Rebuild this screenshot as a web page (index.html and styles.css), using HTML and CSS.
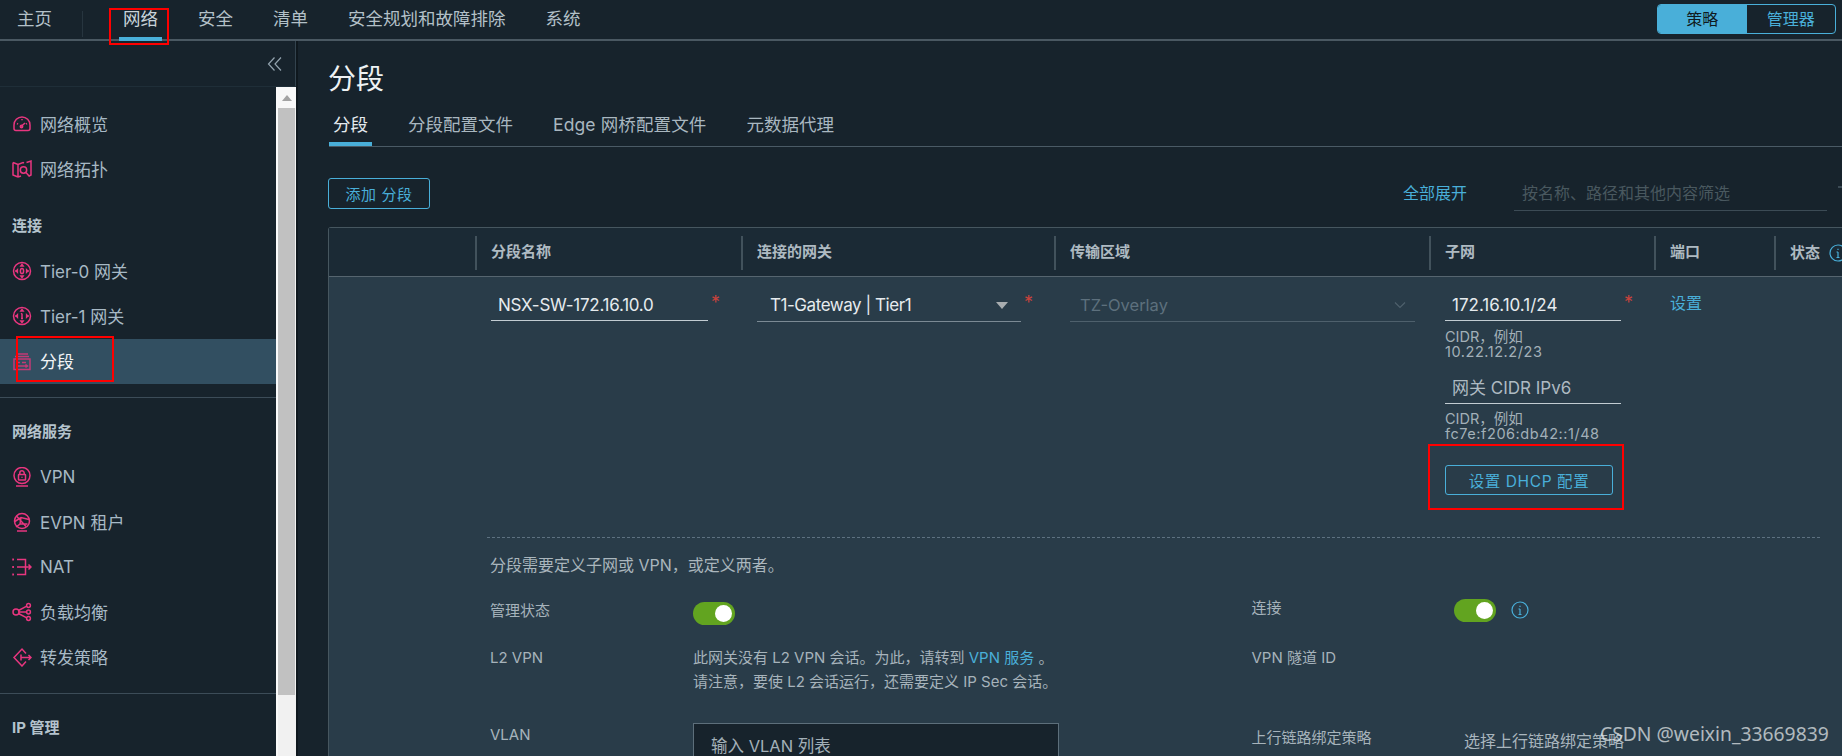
FILE: index.html
```html
<!DOCTYPE html>
<html lang="zh-CN">
<head>
<meta charset="utf-8">
<title>分段</title>
<link rel="stylesheet" href="styles.css">
</head>
<body>
<div class="app">
  <header class="topbar">
    <a class="nav-item">主页</a>
    <span class="nav-sep"></span>
    <a class="nav-item active">网络</a>
    <a class="nav-item">安全</a>
    <a class="nav-item">清单</a>
    <a class="nav-item">安全规划和故障排除</a>
    <a class="nav-item">系统</a>
    <div class="seg-switch">
      <span class="seg on">策略</span>
      <span class="seg">管理器</span>
    </div>
  </header>

  <div class="workspace">
    <aside class="sidebar">
      <div class="collapse-row">
        <svg class="collapse-icon" viewBox="0 0 16 16"><path d="M7.500 1.500 1.500 8l6 6.500M14 1.500 8 8l6 6.500"/></svg>
      </div>
      <div class="side-scroll">
        <nav class="side-nav">
          <a class="side-item"><svg class="ico" viewBox="0 0 20 20"><path d="M2 11a8 8 0 0 1 16 0v3.500a2 2 0 0 1-2 2H4a2 2 0 0 1-2-2zM5 9.500l1 .6M10 5v1.200M15 9.500l-1 .6M9 12.500l4-3.500"/><circle cx="9.500" cy="12.500" r="1.200"/></svg><span>网络概览</span></a>
          <a class="side-item"><svg class="ico" viewBox="0 0 20 20"><path d="M1 3.500 6 5.500 11 3.500 12 4M6 5.500V18M6 18 1 16V3.500M6 18l3-1M14.500 3.500 19 2v14l-2 1"/><circle cx="11.500" cy="11" r="3.200"/><path d="m14 13.500 3.500 4"/></svg><span>网络拓扑</span></a>
          <h3 class="side-head">连接</h3>
          <a class="side-item"><svg class="ico" viewBox="0 0 20 20"><circle cx="10" cy="10" r="8.500"/><ellipse cx="10" cy="10" rx="1.600" ry="2.600"/><path d="M10 2.800v1.800M10 15.400v1.800M3 10h2.400M14.600 10H17M4.200 10l1.200-1.200v2.400zM15.800 10l-1.200-1.200v2.400zM10 3.500 8.900 5h2.200zM10 16.500 8.900 15h2.200z"/></svg><span>Tier-0 网关</span></a>
          <a class="side-item"><svg class="ico" viewBox="0 0 20 20"><circle cx="10" cy="10" r="8.500"/><path d="M10 7.500v5M9 8l1-.5M9 12.500h2M3 10h2.400M14.600 10H17M4.200 10l1.200-1.200v2.400zM15.800 10l-1.200-1.200v2.400zM10 3.500 8.900 5h2.200zM10 16.500 8.900 15h2.200z"/></svg><span>Tier-1 网关</span></a>
          <a class="side-item active"><svg class="ico" viewBox="0 0 20 20"><path d="M4 3h12M3 5.500h14"/><rect x="2" y="8" width="16" height="10.500"/><path d="M5 11.500h3M10 11.500h4M5 15h6M11 15h4M13.500 13.500 15.500 15l-2 1.500"/></svg><span>分段</span></a>
          <hr class="side-rule">
          <h3 class="side-head">网络服务</h3>
          <a class="side-item"><svg class="ico" viewBox="0 0 20 20"><circle cx="10" cy="8.500" r="8"/><rect x="6.500" y="7.500" width="7" height="5.500" rx=".5"/><path d="M7.800 7.500V6a2.200 2.200 0 0 1 4.400 0v1.500M10 9.800v1M4 19h12"/></svg><span>VPN</span></a>
          <a class="side-item"><svg class="ico" viewBox="0 0 20 20"><circle cx="10" cy="9" r="7.500"/><path d="M4.500 4 14 14.500M2.800 9.500 9 5.500l8 2M9 5.500 8 12l-4 3M8 12l7.500 0M5 19h10"/></svg><span>EVPN 租户</span></a>
          <a class="side-item"><svg class="ico" viewBox="0 0 20 20"><path d="M5 2.500h8.500v15H5M5 10h14M16.500 7.500 19 10l-2.500 2.500M1 2.500h1M1 10h1M1 17.500h1M1 1.500v2M1 9v2M1 16.500v2"/></svg><span>NAT</span></a>
          <a class="side-item"><svg class="ico" viewBox="0 0 20 20"><circle cx="4" cy="10" r="3"/><circle cx="16.500" cy="3.500" r="1.900"/><circle cx="16.500" cy="10" r="1.900"/><circle cx="16.500" cy="16.500" r="1.900"/><path d="M6.500 8.500 14.800 4.200M7 10h7.600M6.500 11.500l8.300 4.300"/></svg><span>负载均衡</span></a>
          <a class="side-item"><svg class="ico" viewBox="0 0 20 20"><path d="M14 6.500 10 2 2 10.500 10 19l4-4.500M9 7.500v6M9 10.500h10M16.500 8l2.500 2.500-2.500 2.500"/></svg><span>转发策略</span></a>
          <hr class="side-rule">
          <h3 class="side-head">IP 管理</h3>
        </nav>
        <div class="scrollbar">
          <div class="scroll-btn"><span class="scroll-arrow"></span></div>
          <div class="scroll-thumb"></div>
        </div>
      </div>
    </aside>

    <main class="content">
      <h1 class="page-title">分段</h1>
      <div class="tabs">
        <a class="tab active">分段</a>
        <a class="tab">分段配置文件</a>
        <a class="tab tab-edge">Edge 网桥配置文件</a>
        <a class="tab">元数据代理</a>
      </div>

      <div class="toolbar">
        <button class="btn add-btn">添加 分段</button>
        <a class="link expand-all">全部展开</a>
        <div class="filter">按名称、路径和其他内容筛选</div>
        <span class="filter-icon"></span>
      </div>

      <section class="table">
        <div class="thead">
          <div class="th"></div>
          <div class="th">分段名称</div>
          <div class="th">连接的网关</div>
          <div class="th">传输区域</div>
          <div class="th">子网</div>
          <div class="th">端口</div>
          <div class="th th-status">状态 <svg class="info" viewBox="0 0 18 18"><circle cx="9" cy="9" r="8"/><path d="M9 8v5.500M7.500 8H9M7.500 13.500h3M9 4.800v1.200"/></svg></div>
        </div>
        <div class="row-main">
          <div class="td"></div>
          <div class="td field-line">
            <div class="field name-field">NSX-SW-172.16.10.0</div><span class="req">*</span>
          </div>
          <div class="td field-line">
            <div class="field tall gateway-field"><span>T1-Gateway | Tier1</span><span class="caret"></span></div><span class="req">*</span>
          </div>
          <div class="td">
            <div class="field tall disabled tz-field"><span>TZ-Overlay</span><svg class="chev" viewBox="0 0 12 8"><path d="m1 1.500 5 5 5-5"/></svg></div>
          </div>
          <div class="td subnet-cell">
            <div class="field-line">
              <div class="field subnet-field">172.16.10.1/24</div><span class="req">*</span>
            </div>
            <p class="hint first">CIDR，例如<br><span class="hint-val">10.22.12.2/23</span></p>
            <div class="field subnet-field ipv6">网关 CIDR IPv6</div>
            <p class="hint">CIDR，例如<br><span class="hint-val">fc7e:f206:db42::1/48</span></p>
            <button class="btn dhcp-btn">设置 DHCP 配置</button>
          </div>
          <div class="td"><a class="link ports">设置</a></div>
          <div class="td"></div>
        </div>

        <div class="detail">
          <p class="detail-note">分段需要定义子网或 VPN，或定义两者。</p>
          <div class="form-grid">
            <div class="label admin-label">管理状态</div>
            <div class="toggle-wrap admin-toggle"><span class="toggle"></span></div>
            <div class="label">连接</div>
            <div class="toggle-wrap conn-toggle"><span class="toggle"></span><svg class="info conn-info" viewBox="0 0 18 18"><circle cx="9" cy="9" r="8"/><path d="M9 8v5.500M7.500 8H9M7.500 13.500h3M9 4.800v1.200"/></svg></div>

            <div class="label second">L2 VPN</div>
            <p class="para">此网关没有 L2 VPN 会话。为此，请转到 <a class="link">VPN 服务</a> 。<br>请注意，要使 L2 会话运行，还需要定义 IP Sec 会话。</p>
            <div class="label second">VPN 隧道 ID</div>
            <div></div>

            <div class="label second">VLAN</div>
            <div class="vlan-input">输入 VLAN 列表</div>
            <div class="label uplink-label">上行链路绑定策略</div>
            <div class="uplink-select">选择上行链路绑定策略</div>
          </div>
        </div>
      </section>
    </main>
  </div>

  <span class="mark mark-nav"></span>
  <span class="mark mark-side"></span>
  <span class="mark mark-dhcp"></span>
  <span class="watermark">CSDN @weixin_33669839</span>
</div>
</body>
</html>
```

FILE: styles.css
```css
* { box-sizing: border-box; }
html, body { margin: 0; padding: 0; height: 756px; overflow: hidden; background: #17232c; }
body { font-family: Inter, "Noto Sans CJK SC", sans-serif; color: #adbbc4; }
a { text-decoration: none; }
p, h1, h3 { margin: 0; }

.app { position: relative; width: 1842px; height: 756px; overflow: hidden; display: flex; flex-direction: column; }

/* top bar */
.topbar { flex: none; height: 41px; display: flex; align-items: flex-start; padding-left: 13px; border-bottom: 2px solid #4a5862; background: #17232c; }
.nav-item { height: 41px; padding: 0 4px; margin-right: 32px; font-size: 17.500px; line-height: 38px; color: #b3c0c8; border-bottom: 4px solid transparent; }
.nav-item:first-child { margin-right: 26px; }
.nav-item.active { color: #c8d3da; border-bottom-color: #49afd9; }
.nav-sep { width: 1px; height: 26px; margin: 11px 36px 0 0; background: #27353f; }
.seg-switch { margin: 4px 6px 0 auto; width: 179px; height: 30px; display: flex; border: 1px solid #49afd9; border-radius: 4px; overflow: hidden; }
.seg { flex: 1; font-size: 16px; line-height: 28px; text-align: center; color: #49afd9; }
.seg.on { background: #49afd9; color: #101a20; }

/* layout */
.workspace { flex: 1; min-height: 0; display: flex; }
.sidebar { flex: none; width: 298px; border-right: 2px solid #0f181e; box-shadow: inset -1px 0 0 #33434e; display: flex; flex-direction: column; }
.collapse-row { flex: none; height: 46px; border-bottom: 1px solid #1f2e38; display: flex; justify-content: flex-end; align-items: flex-start; padding: 15px 13px 0 0; }
.collapse-icon { width: 16px; height: 16px; fill: none; stroke: #93a3ae; stroke-width: 1.200; }
.side-scroll { flex: 1; min-height: 0; display: flex; }
.side-nav { flex: none; width: 276px; padding-top: 15px; }
.side-item { height: 45px; display: flex; align-items: center; gap: 8px; padding: 0 0 2px 12px; font-size: 17px; color: #a7b9c5; }
.side-item.active { background: #324f61; color: #f2f5f7; }
.side-item.active .ico { stroke: #c33a75; }
.ico { flex: none; width: 20px; height: 20px; fill: none; stroke: #e8367f; stroke-width: 1.500; }
.side-head { height: 45px; margin-top: 12px; padding-left: 12px; font-size: 15px; line-height: 43px; font-weight: 700; color: #b4c3cd; }
.side-rule { height: 1px; margin: 12px 0 0; border: 0; background: #3c4c58; }
.side-item + .side-rule { margin-top: 13px; }

.scrollbar { flex: none; width: 20px; background: #f1f1f1; border-left: 2px solid #fafafa; }
.scroll-btn { height: 21px; background: #f8f8f8; display: flex; justify-content: center; align-items: center; }
.scroll-arrow { width: 0; height: 0; border-left: 5px solid transparent; border-right: 5px solid transparent; border-bottom: 6px solid #a3a3a3; }
.scroll-thumb { width: 17px; height: 587px; background: #c1c1c1; }

/* content */
.content { flex: 1; min-width: 0; padding: 20px 0 0 31px; overflow: hidden; }
.page-title { margin-left: -1px; font-size: 28px; line-height: 36px; font-weight: 400; color: #eef2f4; }
.tabs { margin-top: 7px; height: 43px; display: flex; border-bottom: 1px solid #4a5a65; }
.tab { height: 42px; padding: 0 4px; margin-right: 32px; font-size: 17.500px; line-height: 42px; color: #a9b7c0; border-bottom: 4px solid transparent; }
.tab.active { color: #e4eaee; border-bottom-color: #49afd9; }
.tab-edge { letter-spacing: .12px; }

.toolbar { margin-top: 31px; height: 33px; display: flex; align-items: flex-start; }
.btn { font-family: inherit; background: none; border: 1px solid #49afd9; border-radius: 3px; color: #49afd9; font-size: 15px; letter-spacing: .6px; padding: 0; }
.add-btn { width: 102px; height: 31px; margin-left: -1px; }
.link { color: #49afd9; }
.expand-all { margin-left: auto; font-size: 16px; line-height: 30px; }
.filter { flex: none; width: 313px; height: 33px; margin: 0 11px 0 47px; padding-left: 8px; border-bottom: 1px solid #3c4b55; font-size: 16px; line-height: 30px; color: #49585f; }
.filter-icon { flex: none; width: 4px; height: 2px; margin-top: 8px; background: #3b4a54; }

.table { margin: 16px 0 0 -1px; width: 1536px; border: 1px solid #46565f; border-bottom: 0; border-radius: 3px 3px 0 0; background: #293c49; }
.thead, .row-main { display: grid; grid-template-columns: 146px 266px 313px 375px 225px 120px 1fr; }
.thead { height: 49px; padding-top: 8px; background: #1b2a35; border-bottom: 1px solid #56656f; }
.th { height: 34px; padding-left: 14px; border-left: 2px solid #42525c; font-size: 15px; line-height: 32px; font-weight: 700; color: #aebac2; }
.th:first-child { border-left: 0; }
.th-status { white-space: nowrap; display: flex; gap: 9px; align-items: center; }
.info { width: 18px; height: 18px; flex: none; fill: none; stroke: #49afd9; stroke-width: 1.200; }

.row-main { padding: 12px 0 42px; }
.td { padding-left: 16px; }
.field-line { display: flex; align-items: flex-start; gap: 3px; }
.field { height: 32px; padding-left: 7px; border-bottom: 1px solid #c2ccd2; font-size: 17px; line-height: 32px; color: #e6ebee; white-space: nowrap; }
.field.tall { height: 33px; border-bottom-color: #7b8a94; display: flex; justify-content: space-between; align-items: center; }
.name-field { width: 217px; letter-spacing: -.25px; }
.gateway-field { width: 264px; padding-left: 13px; padding-right: 13px; letter-spacing: -.45px; }
.tz-field { width: 345px; padding-left: 10px; padding-right: 9px; letter-spacing: 0; }
.field.disabled { border-bottom-color: #4e606c; color: #5d707d; font-size: 16.500px; }
.caret { width: 0; height: 0; border-left: 6px solid transparent; border-right: 6px solid transparent; border-top: 7px solid #a8adb0; }
.chev { width: 12px; height: 8px; fill: none; stroke: #4e606c; stroke-width: 1.200; }
.req { margin-top: 5px; font-size: 18px; line-height: 18px; color: #c8423c; }
.subnet-field { width: 176px; }
.subnet-field.ipv6 { margin-top: 13px; color: #aebac2; }
.hint { margin-top: 7px; font-size: 14.500px; line-height: 15px; color: #a3b0b8; white-space: nowrap; }
.hint.first { margin-top: 8px; }
.hint-val { letter-spacing: .55px; }
.dhcp-btn { display: block; width: 168px; height: 30px; margin-top: 24px; font-size: 15.500px; }
.ports { font-size: 16px; line-height: 28px; display: block; padding-left: 0; }

/* detail */
.detail { margin-left: 158px; width: 1333px; border-top: 1px dashed #5d7180; padding: 17px 0 0 3px; }
.detail-note { font-size: 16px; line-height: 20px; color: #aab6bd; }
.form-grid { margin-top: 23px; display: grid; grid-template-columns: 203px 558.500px 202.500px 1fr; grid-template-rows: 49px 76px 40px; }
.label { font-size: 15px; line-height: 20px; color: #a6b3bb; white-space: nowrap; }
.admin-label { margin-top: 3px; }
.second { margin-top: 1px; }
.form-grid > .second:nth-child(9) { margin-top: 2px; }
.uplink-label { margin-top: 5px; }
.toggle-wrap { display: flex; align-items: flex-start; }
.admin-toggle { padding-top: 4px; }
.conn-toggle { padding-top: 1px; }
.toggle { position: relative; width: 42px; height: 23px; border-radius: 12px; background: #62a420; }
.toggle::after { content: ""; position: absolute; right: 3px; top: 3px; width: 17px; height: 17px; border-radius: 50%; background: #fff; }
.conn-info { margin: 2px 0 0 15px; }
.para { margin-top: -1px; font-size: 15px; line-height: 24px; color: #a6b3bb; white-space: nowrap; }
.vlan-input { width: 366px; height: 50px; padding: 10px 0 0 17px; background: #17232c; border: 1px solid #5d6f7b; font-size: 16.500px; line-height: 24px; color: #a3b0b8; }
.uplink-select { width: 366px; height: 31px; margin-top: 3px; padding-left: 10px; font-size: 16px; line-height: 30px; color: #a9b6be; border-bottom: 1px solid #8595a0; white-space: nowrap; }

/* annotations drawn over the screenshot */
.mark { position: absolute; border: 2px solid #f00; pointer-events: none; }
.mark-nav { left: 109px; top: 8px; width: 60px; height: 37px; }
.mark-side { left: 16px; top: 336px; width: 98px; height: 46px; }
.mark-dhcp { left: 1428px; top: 444px; width: 196px; height: 66px; }
.watermark { position: absolute; left: 1600px; top: 719px; font-family: "Noto Sans", sans-serif; font-size: 19.300px; line-height: 30px; color: rgba(232, 236, 238, .72); white-space: nowrap; }
```
